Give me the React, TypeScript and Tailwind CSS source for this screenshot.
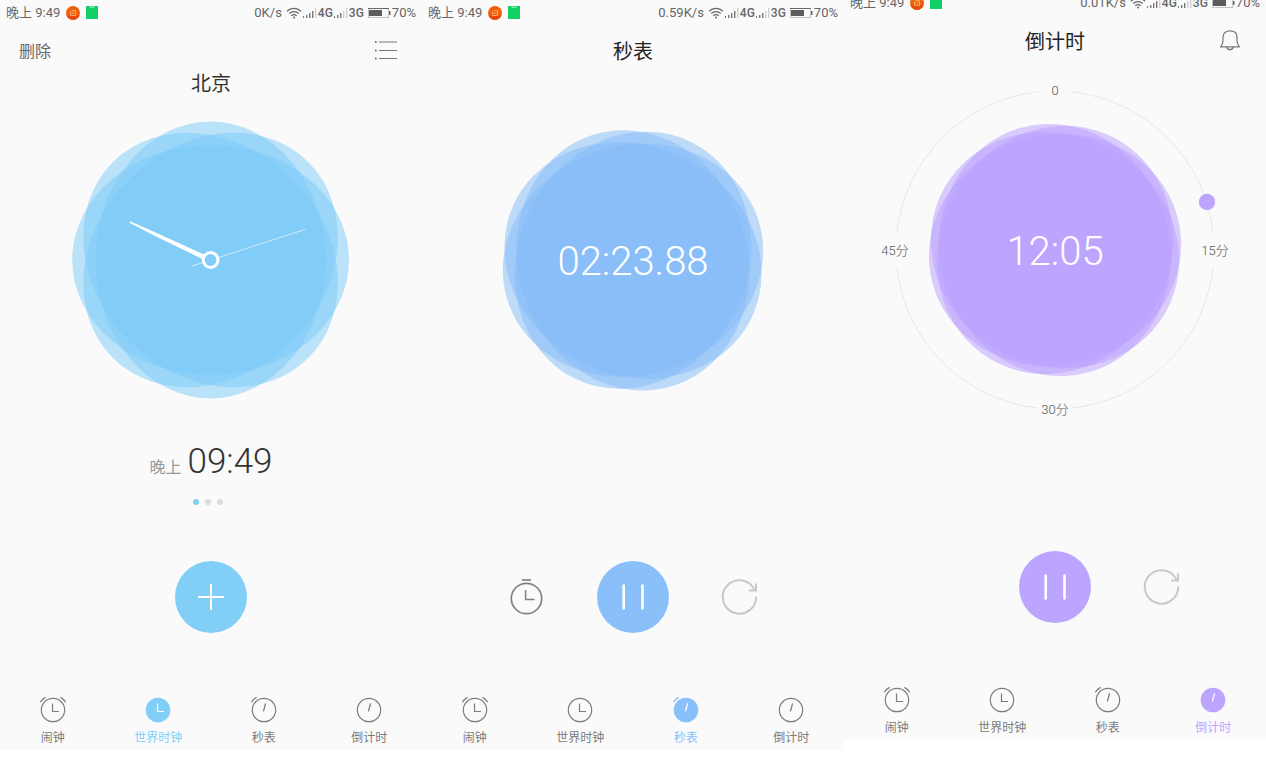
import React from 'react';
import clsx from 'clsx';

type TabId = 'alarm' | 'world' | 'stopwatch' | 'timer';

const tabs: { id: TabId; label: string }[] = [
  { id: 'alarm', label: '闹钟' },
  { id: 'world', label: '世界时钟' },
  { id: 'stopwatch', label: '秒表' },
  { id: 'timer', label: '倒计时' },
];

const activeColor: Record<TabId, string> = {
  alarm: 'text-[#81cff7]',
  world: 'text-[#81cff7]',
  stopwatch: 'text-[#89c0fa]',
  timer: 'text-[#bca5ff]',
};

const Signal: React.FC<{ level: number }> = ({ level }) => (
  <svg width="14" height="12" viewBox="0 0 14 12" aria-hidden="true">
    {[2, 3, 5, 7, 10].map((h, i) => (
      <rect
        key={h}
        x={i * 3}
        y={11 - h}
        width={i === 0 ? 1 : 1.4}
        height={h}
        fill={i < level ? '#777' : '#d0d0d0'}
      />
    ))}
  </svg>
);

const StatusBar: React.FC<{ speed: string }> = ({ speed }) => (
  <div className="flex h-6 items-center justify-between px-[6px] pt-px text-[13px] leading-4 text-[#666]">
    <div className="flex items-center gap-[6px]">
      <span>晚上 9:49</span>
      <svg width="14" height="14" viewBox="0 0 14 14" aria-hidden="true">
        <circle cx="7" cy="7" r="7" fill="#f0600b" />
        <path d="M0.6 9.5a7 7 0 0 0 12.8 0z" fill="#e8480c" />
        <path d="M5.5 4.5H9.5V9.5H4.5V5.5M5.5 7H8.5" fill="none" stroke="#f9a56b" strokeWidth="1" />
      </svg>
      <svg width="12" height="13" viewBox="0 0 12 13" aria-hidden="true">
        <path d="M0 0H12V13H0z" fill="#10d066" />
        <path d="M4 0V1.3H8V0" fill="none" stroke="#9cecc0" />
      </svg>
    </div>
    <div className="flex items-center gap-px">
      <span className="mr-[3px]">{speed}</span>
      <svg width="16" height="12" viewBox="0 0 16 12" fill="none" stroke="#666" strokeWidth="1.2" aria-hidden="true">
        <path d="M1 4.2a10 10 0 0 1 14 0M3.2 6.6a7 7 0 0 1 9.6 0M5.3 8.8a4 4 0 0 1 5.4 0" />
        <circle cx="8" cy="10.6" r="1" fill="#666" stroke="none" />
      </svg>
      <Signal level={4} />
      <span className="text-xs leading-4 font-medium">4G</span>
      <Signal level={3} />
      <span className="text-xs leading-4 font-medium">3G</span>
      <svg className="ml-[3px]" width="23" height="10" viewBox="0 0 23 10" aria-hidden="true">
        <rect x="0.5" y="0.5" width="20" height="9" fill="none" stroke="#c4c4c4" />
        <path d="M0 0.5H21" stroke="#666" />
        <rect x="1" y="2" width="13" height="6" fill="#5c5c5c" />
        <rect x="21" y="3" width="1.5" height="4" fill="#666" />
      </svg>
      <span>70%</span>
    </div>
  </div>
);

const TabIcon: React.FC<{ id: TabId; active: boolean }> = ({ id, active }) => {
  const hand = active ? '#fff' : 'currentColor';
  return (
    <svg width="28" height="28" viewBox="0 0 28 28" fill="none" stroke="currentColor" strokeWidth="1.2" aria-hidden="true">
      <circle cx="14" cy="14" r="11.7" fill={active ? 'currentColor' : 'none'} />
      {(id === 'alarm' || id === 'stopwatch') && <path d="M1.3 6.3C2.6 4.2 4.3 2.5 6.6 1.4" />}
      {id === 'alarm' && <path d="M26.7 6.3C25.4 4.2 23.7 2.5 21.4 1.4" />}
      {id === 'alarm' || id === 'world' ? (
        <path d="M13.5 7.5V15.5H20" stroke={hand} />
      ) : (
        <path d="M15.6 7.3L13.4 15.3" stroke={hand} strokeWidth="1.3" />
      )}
    </svg>
  );
};

const TabBar: React.FC<{ current: TabId }> = ({ current }) => (
  <nav className="mt-[63px] grid grid-cols-4 pb-1">
    {tabs.map(({ id, label }) => (
      <button
        key={id}
        type="button"
        className={clsx(
          'flex flex-col items-center gap-[6px] text-xs leading-4',
          id === current ? activeColor[id] : 'text-[#7c7c7c]'
        )}
      >
        <TabIcon id={id} active={id === current} />
        <span>{label}</span>
      </button>
    ))}
  </nav>
);

interface BlobProps {
  cx: number;
  cy: number;
  major: number;
  minor: number;
  tilt: number;
  fill: string;
}

// Four translucent ellipses, each turned by 45° from the one before
const Blob: React.FC<BlobProps> = ({ cx, cy, major, minor, tilt, fill }) => (
  <g fill={fill} fillOpacity="0.51">
    {[0, 45, 90, 135].map((step) => (
      <ellipse
        key={step}
        cx={cx}
        cy={cy}
        rx={minor}
        ry={major}
        transform={`rotate(${step + tilt} ${cx} ${cy})`}
      />
    ))}
  </g>
);

const ResetIcon: React.FC = () => (
  <svg width="38" height="38" viewBox="0 0 38 38" fill="none" stroke="#c8c8c8" strokeWidth="2" aria-hidden="true">
    <path d="M36.2 18.5A16.7 16.7 0 1 1 33.8 10.3L35.2 12.4" />
    <path d="M29 12.5H36V5.5" />
  </svg>
);

const LapIcon: React.FC = () => (
  <svg width="36" height="38" viewBox="0 0 36 38" fill="none" stroke="#808080" strokeWidth="1.7" aria-hidden="true">
    <circle cx="17.5" cy="20.5" r="15.2" />
    <path d="M13 2H22" />
    <path d="M16.6 12V21.4H25.5" strokeWidth="1.5" />
  </svg>
);

const PauseIcon: React.FC = () => (
  <svg width="28" height="28" viewBox="0 0 28 28" stroke="#fff" strokeWidth="2.6" strokeLinecap="round" aria-hidden="true">
    <path d="M4.7 2.5V25.5M23.5 2.5V25.5" />
  </svg>
);

const Slot: React.FC<{ children?: React.ReactNode }> = ({ children }) => (
  <div className="flex size-[72px] items-center justify-center">{children}</div>
);

interface ScreenProps {
  tab: TabId;
  speed: string;
  title?: string;
  left?: React.ReactNode;
  right?: React.ReactNode;
  controls: React.ReactNode;
  children: React.ReactNode;
  className?: string;
}

const Screen: React.FC<ScreenProps> = ({ tab, speed, title, left, right, controls, children, className }) => (
  <section className={clsx('flex min-h-[750px] flex-col bg-[#fafafa]', className)}>
    <StatusBar speed={speed} />
    <header className="mt-2 grid h-[38px] grid-cols-[1fr_auto_1fr] items-center px-[19px]">
      <div className="flex pt-[2px]">{left}</div>
      <h1 className="pt-[2px] text-xl leading-7 text-[#222]">{title}</h1>
      <div className="flex justify-end pr-[6px]">{right}</div>
    </header>
    <div className="flex flex-col items-center">{children}</div>
    <div className="mt-auto flex justify-center gap-[34px]">{controls}</div>
    <TabBar current={tab} />
  </section>
);

const WorldClock: React.FC = () => (
  <Screen
    tab="world"
    speed="0K/s"
    left={
      <button type="button" className="text-base leading-6 text-[#666]">
        删除
      </button>
    }
    right={
      <button type="button" aria-label="列表">
        <svg width="22" height="20" viewBox="0 0 22 20" stroke="#777" aria-hidden="true">
          <path d="M4 1H22M4 9.5H22M4 17.5H22" strokeWidth="1.2" />
          <path d="M0 1H1.6M0 9.5H1.6M0 17.5H1.6" strokeWidth="1.8" />
        </svg>
      </button>
    }
    controls={
      <button type="button" aria-label="添加" className="flex size-[72px] items-center justify-center rounded-full bg-[#81cff7]">
        <svg width="26" height="26" viewBox="0 0 26 26" stroke="#fff" strokeWidth="2" aria-hidden="true">
          <path d="M13 0V26M0 13H26" />
        </svg>
      </button>
    }
  >
    <h2 className="text-xl leading-7 text-[#333]">北京</h2>
    <svg width="300" height="324" viewBox="0 0 300 324" aria-hidden="true">
      <Blob cx={149.6} cy={162} major={138.4} minor={115} tilt={0} fill="#7ccbf7" />
      <path d="M130.4 168.3L244.5 131.3" stroke="#fff" strokeOpacity="0.6" strokeWidth="1" />
      <path d="M69 123.3L94.6 134.5L143 156.6L141 160.8L93.6 137.8L68.6 124.7z" fill="#fff" />
      <circle cx="149.6" cy="162" r="7.4" fill="#82cdf7" stroke="#fff" strokeWidth="3" />
    </svg>
    <div className="mt-5 flex items-end gap-[6px]">
      <span className="text-base leading-7 text-[#999]">晚上</span>
      <time className="text-[35px] leading-10 font-light text-[#333]">09:49</time>
    </div>
    <div className="mt-[17px] mr-[6px] flex gap-[6px]">
      <span className="size-[6px] rounded-full bg-[#81cff7]" />
      <span className="size-[6px] rounded-full bg-[#dcdcdc]" />
      <span className="size-[6px] rounded-full bg-[#dcdcdc]" />
    </div>
  </Screen>
);

const Stopwatch: React.FC = () => (
  <Screen
    tab="stopwatch"
    speed="0.59K/s"
    title="秒表"
    controls={
      <>
        <Slot>
          <button type="button" aria-label="计次">
            <LapIcon />
          </button>
        </Slot>
        <button type="button" aria-label="暂停" className="flex size-[72px] items-center justify-center rounded-full bg-[#89c0fa]">
          <PauseIcon />
        </button>
        <Slot>
          <button type="button" aria-label="重置">
            <ResetIcon />
          </button>
        </Slot>
      </>
    }
  >
    <div className="grid place-items-center">
      <svg className="col-start-1 row-start-1" width="300" height="380" viewBox="0 0 300 380" aria-hidden="true">
        <Blob cx={150} cy={190.3} major={131.8} minor={114.6} tilt={-18.6} fill="#84baf8" />
      </svg>
      <time className="col-start-1 row-start-1 pt-1 text-[40px] leading-[48px] font-light text-white">02:23.88</time>
    </div>
  </Screen>
);

const Timer: React.FC = () => (
  <Screen
    tab="timer"
    speed="0.01K/s"
    title="倒计时"
    className="-mt-[10px]"
    right={
      <button type="button" aria-label="铃声">
        <svg width="22" height="22" viewBox="0 0 22 22" fill="none" stroke="#777" strokeWidth="1.2" aria-hidden="true">
          <path d="M1.5 16.8C3 15.2 4 13.5 4 11V7.2C4 3 7 0.8 11 0.8S18 3 18 7.2V11C18 13.5 19 15.2 20.5 16.8z" strokeLinejoin="round" />
          <path d="M7.6 17C8 18.8 9.3 19.6 11 19.6S14 18.8 14.4 17" />
        </svg>
      </button>
    }
    controls={
      <>
        <Slot />
        <button type="button" aria-label="暂停" className="flex size-[72px] items-center justify-center rounded-full bg-[#bca5ff]">
          <PauseIcon />
        </button>
        <Slot>
          <button type="button" aria-label="重置">
            <ResetIcon />
          </button>
        </Slot>
      </>
    }
  >
    <div className="grid place-items-center">
      <svg className="col-start-1 row-start-1" width="360" height="380" viewBox="0 0 360 380">
        {/* ring with a gap at every quarter */}
        <circle
          cx="180"
          cy="190"
          r="159"
          fill="none"
          stroke="#e8e8e8"
          pathLength="360"
          strokeDasharray="78 12"
          strokeDashoffset="-6"
        />
        <Blob cx={180} cy={190} major={126.9} minor={115.2} tilt={-15.4} fill="#b89fff" />
        <circle cx="332" cy="142" r="8.2" fill="#bca5ff" />
        <g className="text-[13px] font-light" fill="#555" textAnchor="middle">
          <text x="180" y="35">0</text>
          <text x="340" y="195">15分</text>
          <text x="180" y="354">30分</text>
          <text x="20" y="195">45分</text>
        </g>
      </svg>
      <time className="col-start-1 row-start-1 pt-1 text-[40px] leading-[48px] font-light text-white">12:05</time>
    </div>
  </Screen>
);

const App: React.FC = () => (
  <main className="grid grid-cols-3 items-start overflow-hidden bg-white font-[Roboto,'Noto_Sans_CJK_SC',sans-serif]">
    <WorldClock />
    <Stopwatch />
    <Timer />
  </main>
);

export default App;
